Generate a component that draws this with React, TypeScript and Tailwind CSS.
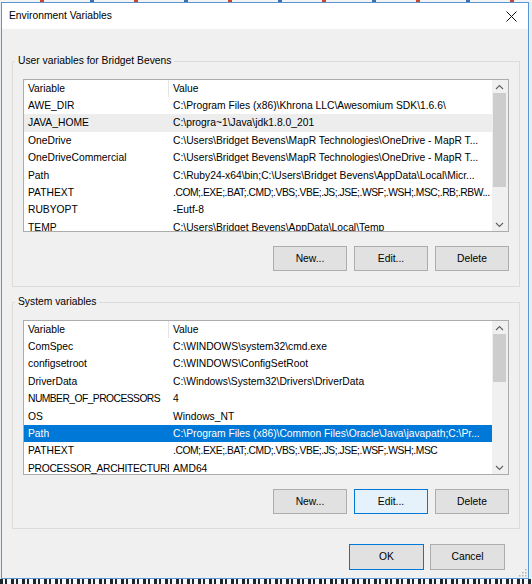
import React from "react"

type Item = { name: string; value: string; state?: "hl" | "sel"; nameCls?: string; valueCls?: string }

const userVars: Item[] = [
  { name: "AWE_DIR", value: "C:\\Program Files (x86)\\Khrona LLC\\Awesomium SDK\\1.6.6\\" },
  { name: "JAVA_HOME", value: "C:\\progra~1\\Java\\jdk1.8.0_201", state: "hl" },
  { name: "OneDrive", value: "C:\\Users\\Bridget Bevens\\MapR Technologies\\OneDrive - MapR T..." },
  { name: "OneDriveCommercial", value: "C:\\Users\\Bridget Bevens\\MapR Technologies\\OneDrive - MapR T..." },
  { name: "Path", value: "C:\\Ruby24-x64\\bin;C:\\Users\\Bridget Bevens\\AppData\\Local\\Micr..." },
  {
    name: "PATHEXT",
    value: ".COM;.EXE;.BAT;.CMD;.VBS;.VBE;.JS;.JSE;.WSF;.WSH;.MSC;.RB;.RBW...",
    valueCls: "tracking-[-0.45px]",
  },
  { name: "RUBYOPT", value: "-Eutf-8" },
  { name: "TEMP", value: "C:\\Users\\Bridget Bevens\\AppData\\Local\\Temp" },
]

const systemVars: Item[] = [
  { name: "ComSpec", value: "C:\\WINDOWS\\system32\\cmd.exe" },
  { name: "configsetroot", value: "C:\\WINDOWS\\ConfigSetRoot" },
  { name: "DriverData", value: "C:\\Windows\\System32\\Drivers\\DriverData" },
  { name: "NUMBER_OF_PROCESSORS", value: "4", nameCls: "tracking-[-0.55px]" },
  { name: "OS", value: "Windows_NT" },
  { name: "Path", value: "C:\\Program Files (x86)\\Common Files\\Oracle\\Java\\javapath;C:\\Pr...", state: "sel" },
  {
    name: "PATHEXT",
    value: ".COM;.EXE;.BAT;.CMD;.VBS;.VBE;.JS;.JSE;.WSF;.WSH;.MSC",
    valueCls: "tracking-[-0.45px]",
  },
  { name: "PROCESSOR_ARCHITECTURE", value: "AMD64", nameCls: "tracking-[-0.3px]" },
]

function Chevron({ up }: { up?: boolean }) {
  return (
    <svg width="9" height="6" viewBox="0 0 9 6" fill="none">
      <path d={up ? "M1 5 L4.5 1.5 L8 5" : "M1 1 L4.5 4.5 L8 1"} stroke="#606060" strokeWidth="1.1" />
    </svg>
  )
}

function ScrollBar({ thumb }: { thumb: string }) {
  return (
    <div className="flex h-full w-[16px] shrink-0 flex-col bg-[#f0f0f0] pr-[1px]">
      <div className="flex h-[13px] items-center justify-center">
        <Chevron up />
      </div>
      <div className={`mx-[1px] bg-[#cdcdcd] ${thumb}`} />
      <div className="flex-1" />
      <div className="flex h-[13px] items-center justify-center">
        <Chevron />
      </div>
    </div>
  )
}

function Row({ item }: { item: Item }) {
  const bg =
    item.state === "sel" ? "bg-[#0078d7] text-white" : item.state === "hl" ? "bg-[#ededed]" : ""
  return (
    <div className={`flex h-[17.4px] shrink-0 items-center ${bg}`}>
      <div className={`w-[145px] shrink-0 overflow-hidden whitespace-nowrap pl-[4px] ${item.nameCls ?? ""}`}>
        {item.name}
      </div>
      <div className={`min-w-0 flex-1 overflow-hidden whitespace-nowrap pl-[4px] ${item.valueCls ?? ""}`}>
        {item.value}
      </div>
    </div>
  )
}

function VarList({ items, height, thumb }: { items: Item[]; height: string; thumb: string }) {
  return (
    <div className={`flex min-w-0 border border-[#acacac] bg-white ${height}`}>
      <div className="flex min-w-0 flex-1 flex-col overflow-hidden">
        <div className="flex h-[17px] shrink-0 items-center">
          <div className="w-[144px] shrink-0 pl-[4px]">Variable</div>
          <div className="h-full w-px bg-[#e5e5e5]" />
          <div className="pl-[4px]">Value</div>
        </div>
        {items.map((item) => (
          <Row key={item.name} item={item} />
        ))}
      </div>
      <ScrollBar thumb={thumb} />
    </div>
  )
}

function Button({ label, hover }: { label: string; hover?: boolean }) {
  const look = hover ? "bg-[#e5f1fb] border-[#0078d7]" : "bg-[#e1e1e1] border-[#adadad]"
  return (
    <div className={`flex h-[25px] w-[74px] items-center justify-center border ${look}`}>{label}</div>
  )
}

function Group({
  title,
  items,
  listHeight,
  thumb,
  editHover,
  className,
}: {
  title: string
  items: Item[]
  listHeight: string
  thumb: string
  editHover?: boolean
  className: string
}) {
  return (
    <fieldset className={`ml-[10px] w-[508px] min-w-0 border border-[#dcdcdc] ${className}`}>
      <legend className="ml-[2px] px-[3px] leading-[14px]">{title}</legend>
      <div className="px-[10px] pt-[11px]">
        <VarList items={items} height={listHeight} thumb={thumb} />
        <div className="mt-[14px] flex justify-end gap-[7px]">
          <Button label="New..." />
          <Button label="Edit..." hover={editHover} />
          <Button label="Delete" />
        </div>
      </div>
    </fieldset>
  )
}

export default function App() {
  return (
    <div className="flex h-[584px] w-[532px] flex-col overflow-hidden bg-[#e9eef3] font-['Liberation_Sans',Arial,sans-serif] text-[10.3px] text-black">
      <div className="h-[2px] shrink-0 bg-[repeating-linear-gradient(90deg,#f3f3f3_0_40px,#c9452f_40px_44px,#f3f3f3_44px_90px,#3a6fb0_90px_94px)]" />
      <div className="relative ml-[1px] flex h-[577px] w-[528px] shrink-0 flex-col border border-[#5897d4] bg-[#f0f0f0]">
        <div className="flex h-[26px] shrink-0 items-center justify-between bg-white pl-[7px] pr-[11px]">
          <span>Environment Variables</span>
          <svg width="11" height="11" viewBox="0 0 11 11">
            <path d="M0.5 0.5 L10.5 10.5 M10.5 0.5 L0.5 10.5" stroke="#111" strokeWidth="1" />
          </svg>
        </div>
        <Group
          className="mt-[25px] pb-[15px]"
          title="User variables for Bridget Bevens"
          items={userVars}
          listHeight="h-[153px]"
          thumb="h-[94px]"
        />
        <Group
          className="mt-[8px] pb-[14px]"
          title="System variables"
          items={systemVars}
          listHeight="h-[155px]"
          thumb="h-[48px]"
          editHover
        />
        <div className="mt-[15px] flex justify-end gap-[6px] pr-[23px]">
          <div className="flex h-[26px] w-[75px] items-center justify-center border border-[#0078d7] bg-[#e1e1e1]">
            OK
          </div>
          <div className="flex h-[26px] w-[75px] items-center justify-center border border-[#adadad] bg-[#e1e1e1]">
            Cancel
          </div>
        </div>
        <svg className="absolute bottom-[1px] right-[1px]" width="10" height="10" viewBox="0 0 10 10">
          {[
            [8, 2],
            [8, 5],
            [5, 5],
            [8, 8],
            [5, 8],
            [2, 8],
          ].map(([x, y]) => (
            <rect key={`${x}-${y}`} x={x} y={y} width="1.5" height="1.5" fill="#b5b5b5" />
          ))}
        </svg>
      </div>
      <div className="h-[5px] shrink-0 bg-[repeating-linear-gradient(90deg,#1f252c_0_3px,#f4f6f8_3px_5px,#1f252c_5px_7px,#f4f6f8_7px_11px)]" />
    </div>
  )
}
